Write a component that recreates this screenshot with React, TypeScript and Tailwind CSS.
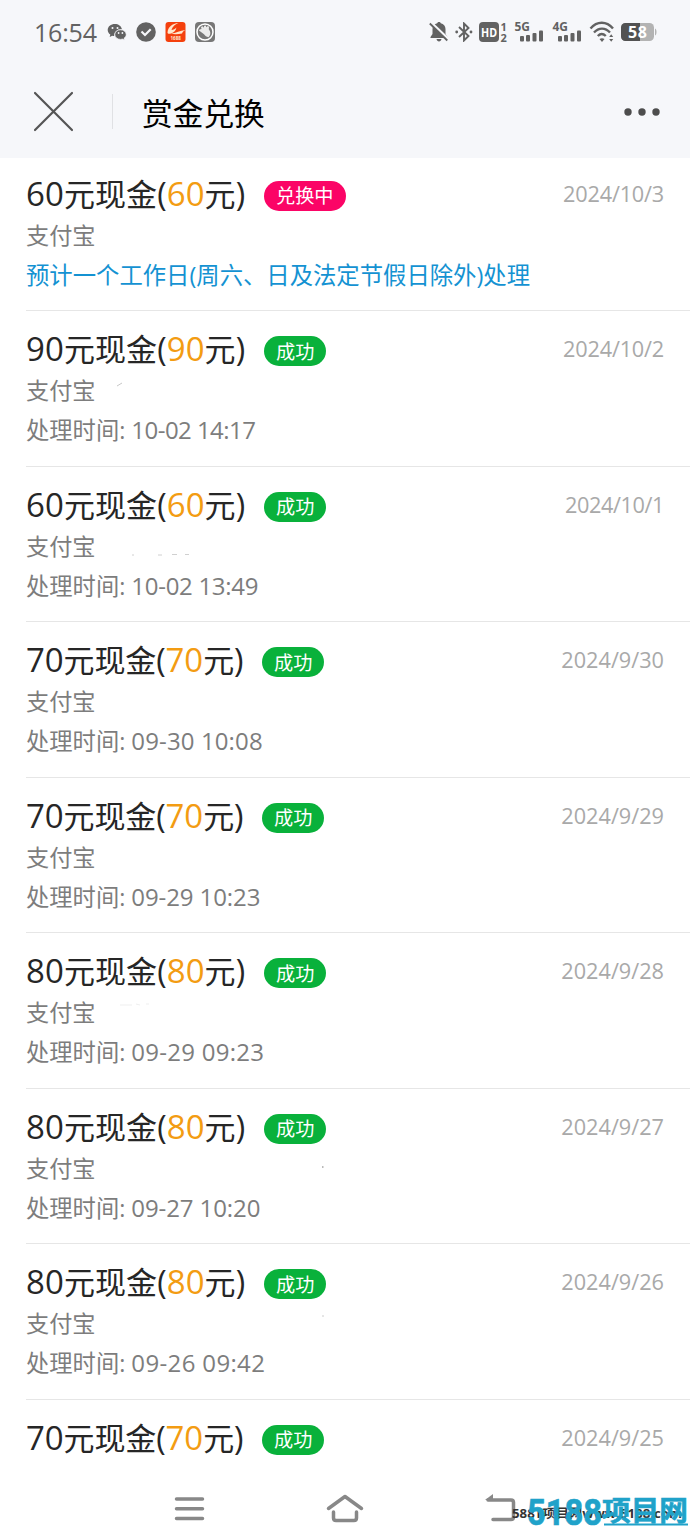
import React from 'react';

interface Exchange {
  amount: number;
  date: string;
  dateSpacing?: string;
  processed?: string;
  processedSpacing?: string;
  pending?: boolean;
  residue?: string;
  residueColor?: string;
}

const exchanges: Exchange[] = [
  { amount: 60, date: '2024/10/3', dateSpacing: 'tracking-[-0.2px]', pending: true },
  { amount: 90, date: '2024/10/2', dateSpacing: 'tracking-[-0.2px]', processed: '10-02 14:17', processedSpacing: 'tracking-[-0.55px]', residue: 'M21 15l5-3', residueColor: '#c8c8c8' },
  { amount: 60, date: '2024/10/1', dateSpacing: 'tracking-[-0.4px]', processed: '10-02 13:49', processedSpacing: 'tracking-[-0.3px]', residue: 'M36 28h2M62 28h4M76 27.5h5M89 27.5h4', residueColor: '#d0d0d0' },
  { amount: 70, date: '2024/9/30', processed: '09-30 10:08', processedSpacing: 'tracking-[0.12px]' },
  { amount: 70, date: '2024/9/29', processed: '09-29 10:23', processedSpacing: 'tracking-[-0.1px]' },
  { amount: 80, date: '2024/9/28', processed: '09-29 09:23', processedSpacing: 'tracking-[0.25px]', residue: 'M24 12h12M40 11l4 1M50 11h3', residueColor: '#efefef' },
  { amount: 80, date: '2024/9/27', processed: '09-27 10:20', processedSpacing: 'tracking-[-0.1px]', residue: 'M226 18h1.500', residueColor: '#777' },
  { amount: 80, date: '2024/9/26', processed: '09-26 09:42', processedSpacing: 'tracking-[0.35px]', residue: 'M226 12h2', residueColor: '#ccc' },
  { amount: 70, date: '2024/9/25' },
];

const Signal: React.FC<{ label: string }> = ({ label }) => (
  <svg className="overflow-visible" width="30" height="30" viewBox="0 -4 30 30" fill="#626262">
    <text x="0.500" y="10" fontSize="12" fontWeight="700" textLength="15.500" lengthAdjust="spacingAndGlyphs">{label}</text>
    <rect x="6" y="15" width="4" height="5.500" rx="1" />
    <rect x="12" y="14" width="4" height="6.500" rx="1" />
    <rect x="18.500" y="12" width="4" height="8.500" rx="1" />
    <rect x="25" y="9.500" width="4" height="11" rx="1" />
  </svg>
);

const StatusBar: React.FC = () => (
  <div className="flex h-16 items-center justify-between pl-[34px] pr-[33px] text-[#626262]">
    <div className="flex items-center">
      <span className="w-[64px] whitespace-nowrap text-[25px] font-medium leading-8 tracking-[-0.2px]">16:54</span>
      <svg className="ml-[9px]" width="20" height="18" viewBox="0 0 20 18" fill="#626262">
        <path d="M8 1C3.800 1 .7 3.600 .7 7c0 1.900 1 3.500 2.600 4.600L2.700 14l2.500-1.300c.7.2 1.300.3 2 .3C7 9 10 6 14.900 6 14.200 3 11.400 1 8 1Z" />
        <path d="M13.500 6.800c-3.200 0-5.700 2.100-5.700 4.800s2.500 4.800 5.700 4.800c.7 0 1.400-.1 2-.3l2 1-.5-1.800c1.400-.9 2.200-2.200 2.200-3.700 0-2.700-2.500-4.800-5.700-4.800Z" stroke="#f6f7fa" strokeWidth=".7" />
        <g fill="#f6f7fa">
          <circle cx="5.500" cy="5" r="1" />
          <circle cx="10.500" cy="5" r="1" />
          <circle cx="11.600" cy="10" r=".9" />
          <circle cx="15.400" cy="10" r=".9" />
        </g>
      </svg>
      <svg className="ml-[9px]" width="20" height="20" viewBox="0 0 20 20">
        <circle cx="10" cy="10" r="9.800" fill="#626262" />
        <path d="m5.500 9.500 3.500 3.500 5.700-5.700" fill="none" stroke="#f6f7fa" strokeWidth="2.200" />
      </svg>
      <svg className="ml-[9px] overflow-visible" width="21" height="20" viewBox="0 0 21 20">
        <rect x=".5" width="20" height="20" rx="3" fill="#f4400d" />
        <path d="M2.500 10.500C3 5 7 1.500 13.500 1 9 3 7.500 5 6.500 8c2 0 3.500-1 5-2.500-.5 3-2.500 5-5.500 6-2 .6-3.500.3-3.500-1Z" fill="#ffe7cc" />
        <path d="M6 11.500c5-.3 9-3 14.500-3.500-2 1-3 2-3.500 3.500-4 .8-8 1-11 0Z" fill="#ffe7cc" />
        <path d="M12.500 4.500h5l-2.500 4h-4Z" fill="#f4400d" />
        <text x="5.500" y="17.500" fontSize="4.500" fontWeight="700" fill="#ffe7cc">1688</text>
      </svg>
      <svg className="ml-[9px]" width="20" height="20" viewBox="0 0 20 20">
        <rect width="20" height="20" rx="4" fill="#777" />
        <circle cx="10" cy="10" r="8" fill="none" stroke="#fff" strokeWidth="1.500" />
        <path d="m4.500 7.500 2-.5-.5-2 1.500-.8 1.200 1.500.5-2 1.500-.2.800 1.800 1.300-1.300 1.200.8-.2 2.500 1.200 2c.8 2.500 0 4.500-1.500 6-2-.3-3.500-1.500-4.500-3L4 8.500Z" fill="#fff" fillOpacity=".85" />
      </svg>
    </div>

    <div className="flex items-center">
      <svg width="20" height="20" viewBox="0 0 20 20">
        <path d="M10 0c1.200 0 1.600.6 1.800 1.300C14.600 2 16.500 4.200 16.500 7v5l2 3v1H1.500v-1l2-3V7c0-2.800 1.900-5 4.700-5.700C8.400.6 8.800 0 10 0ZM7.500 17h5c-.3 1.600-1.200 2.500-2.500 2.500S7.800 18.600 7.500 17Z" fill="#626262" />
        <path d="M1.500 0 20 17.500" stroke="#f6f7fa" strokeWidth="2.500" />
        <path d="m.8 1.500 17.500 17" stroke="#626262" strokeWidth="1.800" />
      </svg>
      <svg className="ml-[6px]" width="18" height="20" viewBox="0 0 18 20">
        <path d="m4 5 9.500 9L9 18.500v-17L13.500 6 4 15" fill="none" stroke="#626262" strokeWidth="1.900" />
        <circle cx="1.700" cy="10" r="1.400" fill="#626262" />
        <circle cx="16" cy="10" r="1.400" fill="#626262" />
      </svg>
      <svg className="ml-[6px] overflow-visible" width="29" height="30" viewBox="0 -4 29 30" fill="#626262">
        <rect y="1" width="20" height="20" rx="4" />
        <text x="2" y="15.500" fontSize="12.500" fontWeight="700" fill="#fff" textLength="16" lengthAdjust="spacingAndGlyphs">HD</text>
        <text x="21.500" y="9.500" fontSize="11" fontWeight="700">1</text>
        <text x="21.500" y="20.500" fontSize="11" fontWeight="700">2</text>
      </svg>
      <div className="ml-[6px] flex gap-2">
        <Signal label="5G" />
        <Signal label="4G" />
      </div>
      <svg className="ml-[7px]" width="26" height="22" viewBox="0 0 26 22" fill="none" stroke="#626262" strokeWidth="2.400">
        <path d="M1.500 7.500C8-.2 17.500-.2 24 7.500M5 11.500c4.700-5.200 11.300-5.200 16 0M8.800 15c2.400-2.400 5.500-2.400 8 0" />
        <path d="m10.500 18 2.500 3 2.500-3c-1.600-1.100-3.400-1.100-5 0ZM20.200 16 22.200 13.300 24.200 16ZM20.200 18 22.200 20.700 24.200 18Z" fill="#626262" stroke="none" />
      </svg>
      <svg className="ml-[6px] overflow-visible" width="36" height="20" viewBox="0 0 36 20">
        <rect y="1" width="33" height="18" rx="4.500" fill="#b3b3b3" />
        <path d="M4.500 1H19v18H4.500A4.500 4.500 0 0 1 0 14.500v-9A4.500 4.500 0 0 1 4.500 1Z" fill="#525252" />
        <path d="M34 6.500c2 .5 2 6.500 0 7Z" fill="#b3b3b3" />
        <text x="7" y="15.800" fontSize="16" fontWeight="700" fill="#fff" textLength="19">58</text>
      </svg>
    </div>
  </div>
);

const ExchangeRow: React.FC<{ item: Exchange; first: boolean }> = ({ item, first }) => (
  <div className={`ml-[26px] shrink-0 border-b border-[#e6e6e6] pr-[26px] ${first ? 'h-[153px] pt-4' : 'h-[155.5px] pt-[18.25px]'}`}>
    <div className="flex h-10 items-center justify-between">
      <div className="flex items-center">
        <span className={`whitespace-nowrap text-[31px] leading-10 text-[#262626] ${item.amount === 70 ? 'w-[236px] tracking-[-0.1px]' : 'w-[238px] tracking-[0.08px]'}`}>
          <span className="text-[33px]">{item.amount}</span>元现金<span className="text-[32px]">(</span>
          <span className="text-[33px] text-[#f39c12]">{item.amount}</span>元<span className="text-[32px]">)</span>
        </span>
        <span className={`mt-1 flex h-[30px] items-center rounded-full px-3 text-[19.2px] leading-none text-white ${item.pending ? 'bg-[#fb0466]' : 'bg-[#09b13b]'}`}>
          {item.pending ? '兑换中' : '成功'}
        </span>
      </div>
      <span className={`text-[21.7px] leading-10 text-[#a9a9a9] ${item.dateSpacing ?? ''}`}>{item.date}</span>
    </div>
    {(item.processed || item.pending) && (
      <div className="mt-0.5 flex h-10 text-[23.2px] leading-[39px] text-[#7d7d7d]">
        支付宝
        {item.residue && (
          <svg width="240" height="40" viewBox="0 0 240 40" fill="none" stroke={item.residueColor}>
            <path d={item.residue} />
          </svg>
        )}
      </div>
    )}
    {item.pending && (
      <div className="whitespace-nowrap text-[23.35px] leading-[38px] text-[#1492d2]">
        预计一个工作日(周六、日及法定节假日除外)处理
      </div>
    )}
    {item.processed && (
      <div className="whitespace-nowrap text-[23.3px] leading-[38px] text-[#7d7d7d]">
        处理时间: <span className={`text-[24px] ${item.processedSpacing ?? ''}`}>{item.processed}</span>
      </div>
    )}
  </div>
);

const NavigationBar: React.FC = () => (
  <nav className="relative h-[68px] bg-white">
    <div className="flex h-full items-center pl-[174px] pt-8">
      <svg width="31" height="26" viewBox="0 0 31 26" stroke="#888" strokeWidth="3.500" strokeLinecap="round">
        <path d="M2.500 3h26M2.500 12.700h26M2.500 22.400h26" />
      </svg>
      <svg className="ml-[121px]" width="38" height="30" viewBox="0 0 38 30" fill="none" stroke="#888" strokeWidth="3.500" strokeLinecap="round" strokeLinejoin="round">
        <path d="m2.500 14.500 16.500-12 16.500 12M7.500 18v6q0 2.500 2.500 2.500h18q2.500 0 2.500-2.500v-6" />
      </svg>
      <svg className="ml-[121px]" width="32" height="30" viewBox="0 0 32 30" fill="none" stroke="#888" strokeWidth="3.500" strokeLinecap="round">
        <path d="M3 6h23q2.500 0 2.500 2.500v14.500q0 2.500-2.500 2.500H8" />
        <path d="m0 6 8-6v6Z" fill="#888" stroke="none" />
      </svg>
    </div>
    <svg className="absolute bottom-0 right-0 overflow-visible" width="180" height="37" viewBox="0 0 180 37">
      <text x="2" y="28" fontSize="12.500" fontWeight="700" fill="#333" textLength="170" lengthAdjust="spacingAndGlyphs">588T项目网www.5188.com</text>
      <g fontWeight="700" fill="#20a2c9" stroke="#20a2c9" strokeWidth=".6">
        <text className="font-['Roboto']" x="17" y="34.500" fontSize="36" textLength="75" lengthAdjust="spacingAndGlyphs">5188</text>
        <text x="92" y="30.500" fontSize="28" textLength="86" lengthAdjust="spacingAndGlyphs">项目网</text>
      </g>
      <path d="M94 34.500h84" stroke="#20a2c9" strokeWidth="1.800" />
    </svg>
  </nav>
);

const App: React.FC = () => {
  return (
    <div className="flex h-[1527px] w-[690px] flex-col overflow-hidden bg-white font-['Open_Sans','Noto_Sans_CJK_SC',sans-serif]">
      <header className="h-[158px] shrink-0 bg-[#f6f7fa]">
        <StatusBar />
        <div className="flex h-[95px] items-center pl-[33px] pr-[29px]">
          <svg width="41" height="41" viewBox="0 0 41 41" stroke="#555" strokeWidth="2.200" strokeLinecap="round">
            <path d="m2 2 37 37M39 2 2 39" />
          </svg>
          <div className="ml-[38px] h-[35px] w-px bg-[#e0e1e4]" />
          <h1 className="ml-[29px] mt-0.5 text-[30.7px] leading-10 text-black">赏金兑换</h1>
          <svg className="ml-auto" width="38" height="10" viewBox="0 0 38 10" fill="#4d4d4d">
            <circle cx="5" cy="5" r="3.700" />
            <circle cx="19" cy="5" r="3.700" />
            <circle cx="33" cy="5" r="3.700" />
          </svg>
        </div>
      </header>

      <main className="flex min-h-0 flex-1 flex-col overflow-hidden">
        {exchanges.map((item, index) => (
          <ExchangeRow key={item.date} item={item} first={index === 0} />
        ))}
      </main>

      <NavigationBar />
    </div>
  );
};

export default App;
